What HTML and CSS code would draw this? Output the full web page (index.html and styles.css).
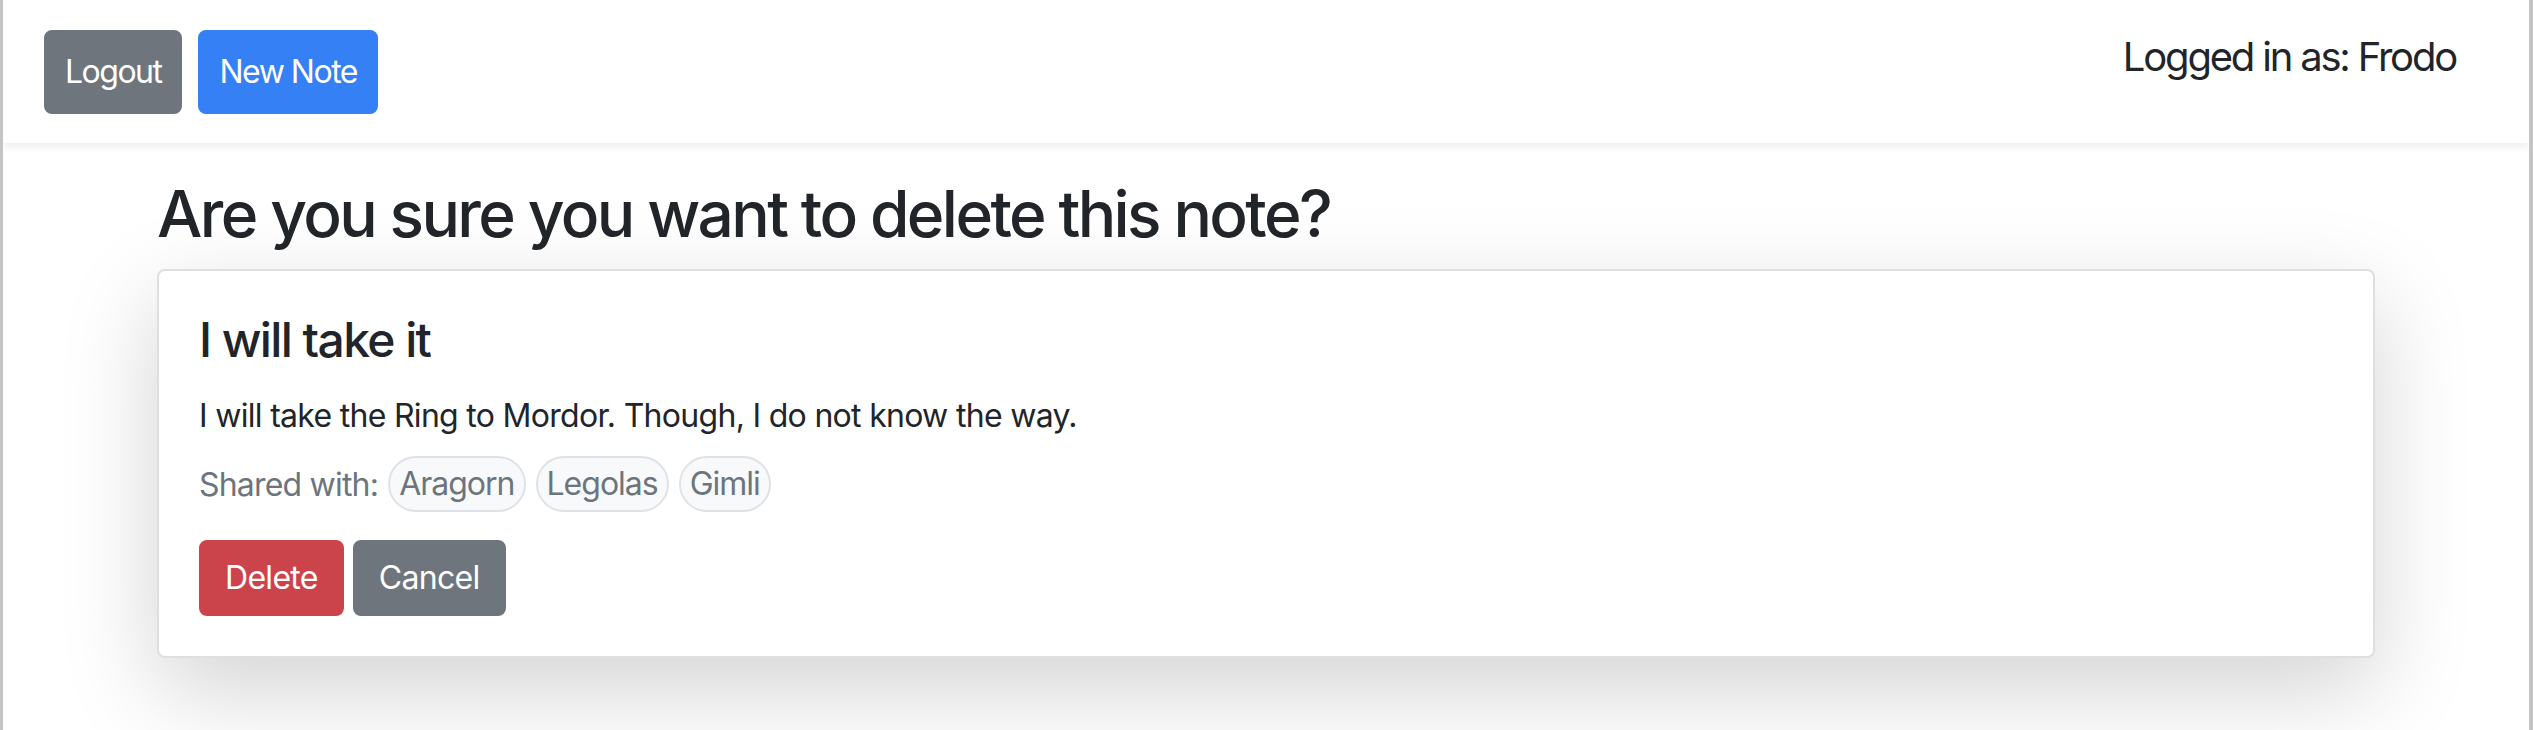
FILE: index.html
```html
<!DOCTYPE html>
<html lang="en">
<head>
<meta charset="utf-8">
<title>Delete note</title>
<link rel="stylesheet" href="styles.css">
</head>
<body>
<nav class="topbar">
  <div class="actions">
    <button class="btn btn-secondary btn-nav">Logout</button>
    <button class="btn btn-primary btn-nav">New Note</button>
  </div>
  <div class="user">Logged in as: Frodo</div>
</nav>
<main class="container">
  <h2 class="page-title">Are you sure you want to delete this note?</h2>
  <div class="card">
    <h4 class="card-title">I will take it</h4>
    <p class="card-text">I will take the Ring to Mordor. Though, I do not know the way.</p>
    <div class="shared">
      <span class="shared-label">Shared with:</span>
      <span class="pill">Aragorn</span>
      <span class="pill">Legolas</span>
      <span class="pill">Gimli</span>
    </div>
    <div class="card-actions">
      <button class="btn btn-danger">Delete</button>
      <button class="btn btn-secondary">Cancel</button>
    </div>
  </div>
</main>
</body>
</html>
```

FILE: styles.css
```css
* { box-sizing: border-box; }

html, body { height: 100%; }

body {
  margin: 0;
  background: #ffffff;
  color: #212529;
  font-family: Inter, "Noto Sans", "Liberation Sans", sans-serif;
  border-left: 3px solid #c4c4c4;
  border-right: 4px solid #c4c4c4;
}

.topbar {
  position: relative;
  z-index: 1;
  height: 143px;
  display: flex;
  justify-content: space-between;
  align-items: flex-start;
  padding: 30px 73px 0 41px;
  background: #ffffff;
  box-shadow: 0 4px 8px rgba(0, 0, 0, 0.075);
}

.actions {
  display: flex;
  gap: 16px;
}

.btn {
  font-family: inherit;
  font-size: 32px;
  line-height: 48px;
  font-weight: 400;
  letter-spacing: -0.7px;
  color: #ffffff;
  border: 2px solid transparent;
  border-radius: 8px;
  padding: 12px 24px;
  cursor: pointer;
}

.btn-nav {
  padding: 16px 19px;
  letter-spacing: -1.5px;
}

.btn-secondary { background: #6e757d; border-color: #6e757d; }
.btn-primary { background: #3580f4; border-color: #3580f4; }
.btn-danger { background: #cc444b; border-color: #cc444b; }

.user {
  font-size: 40px;
  line-height: 60px;
  letter-spacing: -2.2px;
  margin-top: -3px;
}

.container {
  width: 2218px;
  margin: 0 auto;
  padding-top: 33px;
}

.page-title {
  margin: 0 0 16px;
  font-size: 64px;
  font-weight: 500;
  line-height: 1.2;
  letter-spacing: -2.6px;
}

.card {
  background: #ffffff;
  border: 2px solid rgba(0, 0, 0, 0.125);
  border-radius: 8px;
  padding: 40px;
  box-shadow: 0 32px 96px rgba(0, 0, 0, 0.175);
}

.card-title {
  margin: 0 0 24px;
  font-size: 48px;
  font-weight: 500;
  line-height: 1.2;
  letter-spacing: -1.6px;
}

.card-text {
  margin: 0 0 16px;
  font-size: 32px;
  line-height: 48px;
  letter-spacing: -0.7px;
}

.shared {
  display: flex;
  align-items: center;
  gap: 10px;
  height: 56px;
  margin-bottom: 28px;
  font-size: 32px;
  letter-spacing: -0.8px;
  color: #6c757d;
}

.pill {
  background: #f8f9fa;
  border: 2px solid #dfe2e6;
  border-radius: 999px;
  padding: 2px 9px;
  line-height: 48px;
  letter-spacing: -1px;
}

.card-actions {
  display: flex;
  gap: 9px;
}
```
